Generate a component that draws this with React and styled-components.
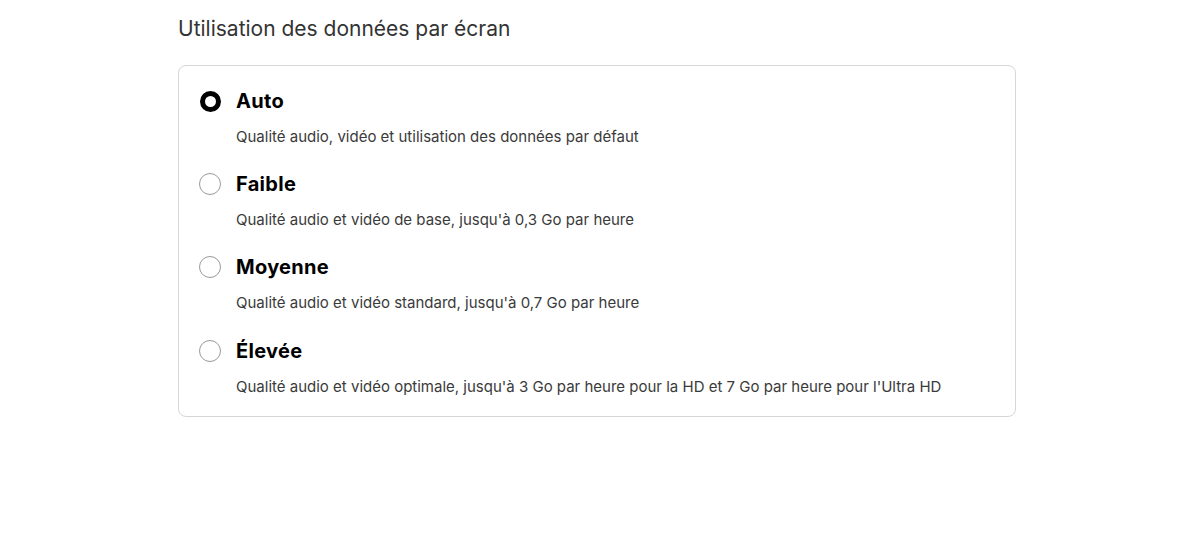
import React from "react";
import styled, { createGlobalStyle } from "styled-components";

const Global = createGlobalStyle`
  html, body { margin: 0; padding: 0; background: #fff; }
  body { font-family: Inter, "Noto Sans", "Liberation Sans", sans-serif; color: #000; }
`;

const Page = styled.div`
  padding: 15px 0 0 178px;
  width: 838px;
`;

const Heading = styled.h2`
  margin: 0 0 22px;
  font-size: 21px;
  line-height: 28px;
  font-weight: 400;
  color: #333;
`;

const Card = styled.div`
  border: 1px solid #d6d6d6;
  border-radius: 8px;
  padding: 21px 20px 19px;
  display: flex;
  flex-direction: column;
  gap: 23.2px;
`;

const Option = styled.label`
  display: grid;
  grid-template-columns: 22px 1fr;
  column-gap: 15px;
  row-gap: 12px;
  cursor: pointer;
`;

const Radio = styled.span`
  box-sizing: border-box;
  align-self: center;
  justify-self: center;
  width: ${(p) => (p.$checked ? "21px" : "22px")};
  height: ${(p) => (p.$checked ? "21px" : "22px")};
  border-radius: 50%;
  border: ${(p) => (p.$checked ? "5px solid #000" : "1px solid #9a9a9a")};
  background: #fff;
`;

const Title = styled.span`
  font-size: 20px;
  line-height: 28px;
  font-weight: 700;
  letter-spacing: 0.3px;
  color: #000;
`;

const Desc = styled.span`
  grid-column: 2;
  font-size: 15px;
  line-height: 20px;
  color: #3a3a3a;
`;

const options = [
  { title: "Auto", desc: "Qualité audio, vidéo et utilisation des données par défaut", checked: true },
  { title: "Faible", desc: "Qualité audio et vidéo de base, jusqu'à 0,3 Go par heure" },
  { title: "Moyenne", desc: "Qualité audio et vidéo standard, jusqu'à 0,7 Go par heure" },
  {
    title: "Élevée",
    desc: "Qualité audio et vidéo optimale, jusqu'à 3 Go par heure pour la HD et 7 Go par heure pour l'Ultra HD",
  },
];

export default function App() {
  return (
    <>
      <Global />
      <Page>
        <Heading>Utilisation des données par écran</Heading>
        <Card>
          {options.map((o) => (
            <Option key={o.title}>
              <Radio $checked={o.checked} />
              <Title>{o.title}</Title>
              <Desc>{o.desc}</Desc>
            </Option>
          ))}
        </Card>
      </Page>
    </>
  );
}
